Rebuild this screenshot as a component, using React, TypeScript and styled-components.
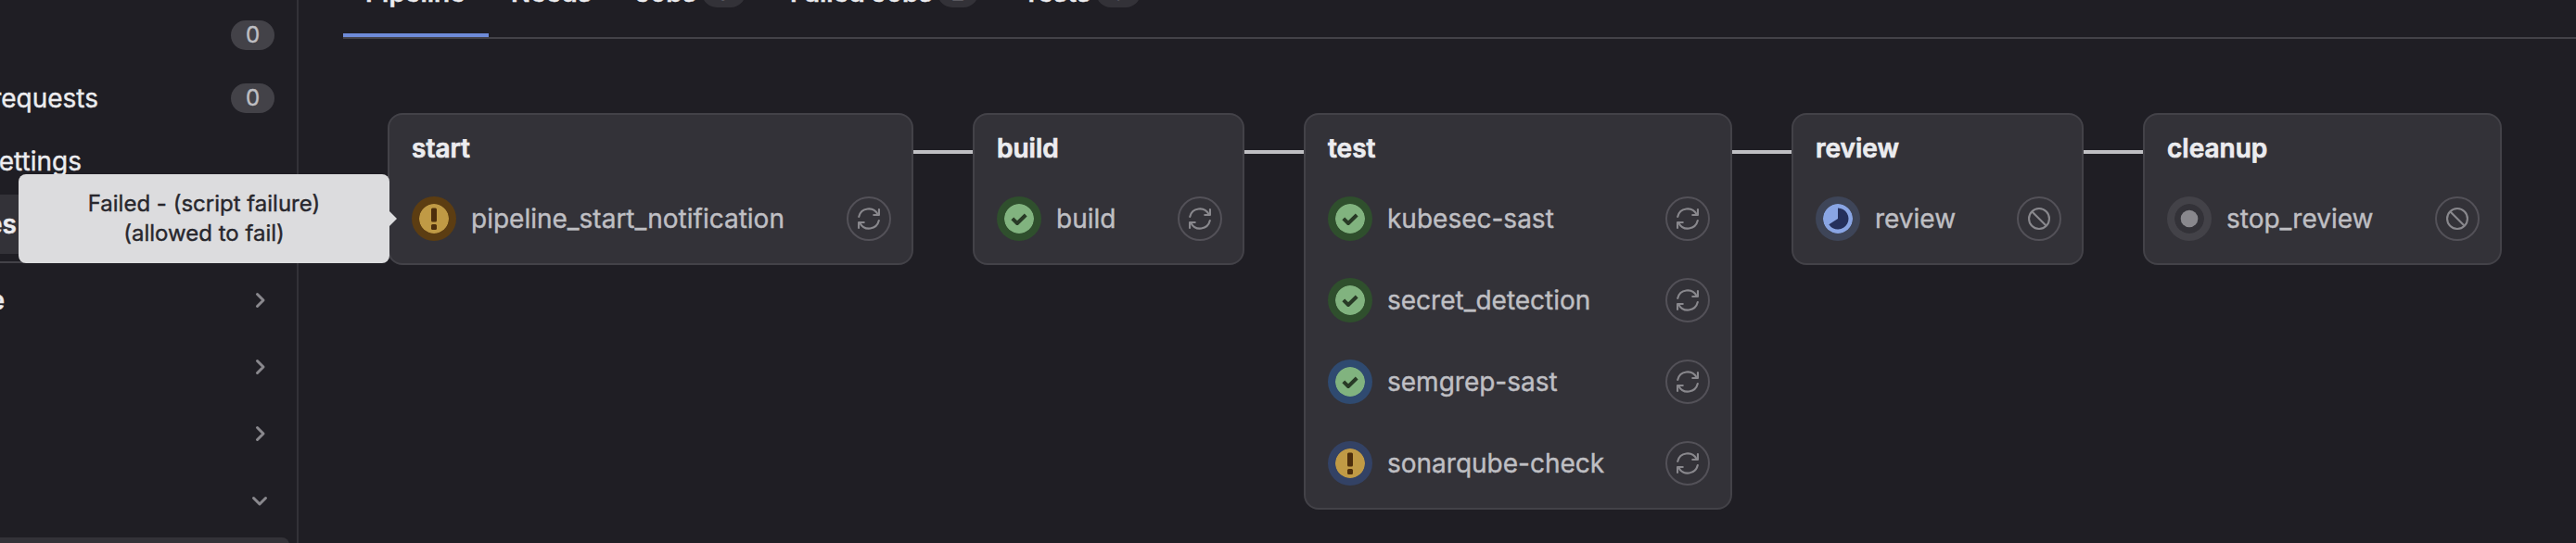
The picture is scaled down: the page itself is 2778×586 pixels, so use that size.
import React from 'react';
import styled, { createGlobalStyle } from 'styled-components';

const GlobalStyle = createGlobalStyle`
  * { box-sizing: border-box; }
  body {
    margin: 0;
    background: #1f1e24;
    font-family: Inter, "Liberation Sans", sans-serif;
    font-size: 28px;
    font-weight: 400;
    color: #ececef;
    -webkit-text-stroke: 0.4px currentColor;
    overflow: hidden;
  }
`;

const Page = styled.div`
  position: relative;
  display: flex;
  width: 2778px;
  height: 586px;
  overflow: hidden;
`;

const Sidebar = styled.aside`
  width: 322px;
  flex: none;
  padding-top: 6px;
  border-right: 2px solid #333238;
  display: flex;
  flex-direction: column;
`;

const NavGroup = styled.div<{ $gap: number }>`
  display: flex;
  flex-direction: column;
  gap: ${p => p.$gap}px;
`;

const NavItem = styled.div<{ $active?: boolean }>`
  display: flex;
  align-items: center;
  justify-content: space-between;
  height: 64px;
  flex: none;
  margin-right: 8px;
  padding-right: 16px;
  border-radius: 0 8px 8px 0;
  background: ${p => (p.$active ? '#333238' : 'transparent')};
`;

const NavLabel = styled.span<{ $end: number; $bold?: boolean }>`
  display: flex;
  justify-content: flex-end;
  width: ${p => p.$end}px;
  line-height: 40px;
  font-weight: ${p => (p.$bold ? 600 : 400)};
`;

const Divider = styled.div`
  height: 2px;
  margin: 8px 16px 8px 0;
  flex: none;
  background: #434248;
`;

const Badge = styled.span`
  display: flex;
  align-items: center;
  justify-content: center;
  width: 47px;
  height: 32px;
  border-radius: 16px;
  background: #434248;
  color: #bfbfc3;
  font-size: 24px;
  line-height: 32px;
`;

const ChevronBox = styled.svg`
  width: 32px;
  height: 32px;
`;

const Main = styled.main`
  flex: 1;
  min-width: 0;
  padding-left: 48px;
`;

const Tabs = styled.div`
  display: flex;
  height: 98px;
  margin-top: -56px;
  border-bottom: 2px solid #434248;
`;

const Tab = styled.div<{ $width: number; $active?: boolean }>`
  display: flex;
  align-items: center;
  justify-content: space-between;
  flex: none;
  width: ${p => p.$width}px;
  height: 96px;
  padding: 0 24px;
  font-weight: 600;
  white-space: nowrap;
  box-shadow: ${p => (p.$active ? 'inset 0 -4px 0 #6e8bd8' : 'none')};
`;

const TabBadge = styled(Badge)<{ $w: number }>`
  width: ${p => p.$w}px;
  background: #333238;
  font-weight: 400;
`;

const Graph = styled.div`
  display: flex;
  align-items: flex-start;
  padding: 80px 0 0 48px;
`;

const Connector = styled.div`
  width: 64px;
  height: 4px;
  margin-top: 40px;
  flex: none;
  background: #bfbfc3;
`;

const StageCard = styled.section<{ $width: number }>`
  width: ${p => p.$width}px;
  flex: none;
  padding: 16px 22px 24px 24px;
  border: 2px solid #434248;
  border-radius: 16px;
  background: #333238;
`;

const StageTitle = styled.h2`
  margin: 0 0 32px;
  font-size: 28px;
  line-height: 40px;
  font-weight: 600;
  -webkit-text-stroke-width: 0.7px;
`;

const JobList = styled.div`
  display: flex;
  flex-direction: column;
  gap: 40px;
`;

const Job = styled.div`
  display: flex;
  align-items: center;
  height: 48px;
`;

const JobName = styled.span`
  flex: 1;
  margin-left: 16px;
  color: #bfbfc3;
  -webkit-text-stroke-color: #bfbfc3;
  white-space: nowrap;
`;

const StatusRing = styled.svg<{ $ring: string }>`
  width: 48px;
  height: 48px;
  padding: 8px;
  flex: none;
  border-radius: 50%;
  background: ${p => p.$ring};
`;

const ActionButton = styled.button`
  display: flex;
  align-items: center;
  justify-content: center;
  width: 48px;
  height: 48px;
  padding: 0;
  flex: none;
  border: 2px solid #535158;
  border-radius: 50%;
  background: transparent;
  color: #89888d;

  svg {
    width: 24px;
    height: 24px;
  }
`;

const Tooltip = styled.div`
  position: absolute;
  left: 20px;
  top: 188px;
  width: 400px;
  height: 96px;
  padding: 16px;
  border-radius: 8px;
  background: #dcdcde;
  color: #28272d;
  -webkit-text-stroke-color: #28272d;
  font-size: 24px;
  line-height: 32px;
  text-align: center;

  &::after {
    content: '';
    position: absolute;
    left: 100%;
    top: 40px;
    border: 8px solid transparent;
    border-right-width: 0;
    border-left-color: #dcdcde;
  }
`;

type Status = 'warning' | 'success' | 'running' | 'manual';

function StatusIcon({ status, ring }: { status: Status; ring: string }) {
  return (
    <StatusRing $ring={ring} viewBox="0 0 32 32">
      {status === 'warning' && (
        <>
          <circle cx="16" cy="16" r="16" fill="#c09a45" />
          <rect x="13" y="4.5" width="6" height="15" rx="1.5" fill="#4d2e0c" />
          <rect x="13" y="22" width="6" height="6" rx="1.5" fill="#4d2e0c" />
        </>
      )}
      {status === 'success' && (
        <>
          <circle cx="16" cy="16" r="16" fill="#81b37f" />
          <path d="M8.8 15.8l5.2 5.2L23.2 12" fill="none" stroke="#283a26" strokeWidth="4" strokeLinejoin="round" />
        </>
      )}
      {status === 'running' && (
        <>
          <circle cx="16" cy="16" r="16" fill="#89a5e4" />
          <path d="M16 4.5A11.5 11.5 0 1 1 6.3 22.2L16 16z" fill="#25305c" />
        </>
      )}
      {status === 'manual' && (
        <>
          <circle cx="16" cy="16" r="16" fill="#333238" />
          <circle cx="16" cy="16" r="9.3" fill="#89888d" />
        </>
      )}
    </StatusRing>
  );
}

const RetryIcon = () => (
  <svg viewBox="0 0 16 16" fill="none" stroke="currentColor" strokeWidth="1.4" strokeLinecap="round" strokeLinejoin="round">
    <path d="M.8 6.6A7.3 7.3 0 0 1 14.4 4.9" />
    <path d="M15.3 1.4v3.9h-3.8" />
    <path d="M15.2 9.4A7.3 7.3 0 0 1 1.6 11.1" />
    <path d="M.7 14.6v-3.9h3.8" />
  </svg>
);

const CancelIcon = () => (
  <svg viewBox="0 0 16 16" fill="none" stroke="currentColor" strokeWidth="1.4">
    <circle cx="8" cy="8" r="7.3" />
    <path d="M3 3l10 10" />
  </svg>
);

const Chevron = ({ down }: { down?: boolean }) => (
  <ChevronBox viewBox="0 0 32 32" fill="none" stroke="#89888d" strokeWidth="3" strokeLinecap="round" strokeLinejoin="round">
    <path d={down ? 'M9.5 13.5l6.5 6.5 6.5-6.5' : 'M13.5 9.5l6.5 6.5-6.5 6.5'} />
  </ChevronBox>
);

const GREEN = '#2f4f2d';
const BROWN = '#5c3d12';

interface JobData {
  name: string;
  status: Status;
  ring: string;
  action: 'retry' | 'cancel';
}

const stages: { name: string; width: number; jobs: JobData[] }[] = [
  {
    name: 'start',
    width: 567,
    jobs: [{ name: 'pipeline_start_notification', status: 'warning', ring: BROWN, action: 'retry' }],
  },
  { name: 'build', width: 293, jobs: [{ name: 'build', status: 'success', ring: GREEN, action: 'retry' }] },
  {
    name: 'test',
    width: 462,
    jobs: [
      { name: 'kubesec-sast', status: 'success', ring: GREEN, action: 'retry' },
      { name: 'secret_detection', status: 'success', ring: GREEN, action: 'retry' },
      { name: 'semgrep-sast', status: 'success', ring: '#2f4a70', action: 'retry' },
      { name: 'sonarqube-check', status: 'warning', ring: '#334265', action: 'retry' },
    ],
  },
  { name: 'review', width: 315, jobs: [{ name: 'review', status: 'running', ring: '#3e4558', action: 'cancel' }] },
  { name: 'cleanup', width: 387, jobs: [{ name: 'stop_review', status: 'manual', ring: '#434248', action: 'cancel' }] },
];

export default function App() {
  return (
    <Page>
      <GlobalStyle />
      <Sidebar>
        <NavGroup $gap={4}>
          <NavItem>
            <NavLabel $end={0} />
            <Badge>0</Badge>
          </NavItem>
          <NavItem>
            <NavLabel $end={106}>requests</NavLabel>
            <Badge>0</Badge>
          </NavItem>
          <NavItem>
            <NavLabel $end={88}>ettings</NavLabel>
          </NavItem>
          <NavItem $active>
            <NavLabel $end={18} $bold>es</NavLabel>
          </NavItem>
        </NavGroup>
        <Divider />
        <NavGroup $gap={8}>
          <NavItem>
            <NavLabel $end={5} $bold>e</NavLabel>
            <Chevron />
          </NavItem>
          <NavItem>
            <NavLabel $end={0} />
            <Chevron />
          </NavItem>
          <NavItem>
            <NavLabel $end={0} />
            <Chevron />
          </NavItem>
          <NavItem>
            <NavLabel $end={0} />
            <Chevron down />
          </NavItem>
          <NavItem $active />
        </NavGroup>
      </Sidebar>
      <Main>
        <Tabs>
          <Tab $width={157} $active>Pipeline</Tab>
          <Tab $width={134}>Needs</Tab>
          <Tab $width={167}>
            Jobs <TabBadge $w={47}>8</TabBadge>
          </Tab>
          <Tab $width={251}>
            Failed Jobs <TabBadge $w={44}>2</TabBadge>
          </Tab>
          <Tab $width={175}>
            Tests <TabBadge $w={48}>0</TabBadge>
          </Tab>
        </Tabs>
        <Graph>
          {stages.map((stage, i) => (
            <React.Fragment key={stage.name}>
              {i > 0 && <Connector />}
              <StageCard $width={stage.width}>
                <StageTitle>{stage.name}</StageTitle>
                <JobList>
                  {stage.jobs.map(job => (
                    <Job key={job.name}>
                      <StatusIcon status={job.status} ring={job.ring} />
                      <JobName>{job.name}</JobName>
                      <ActionButton>{job.action === 'retry' ? <RetryIcon /> : <CancelIcon />}</ActionButton>
                    </Job>
                  ))}
                </JobList>
              </StageCard>
            </React.Fragment>
          ))}
        </Graph>
      </Main>
      <Tooltip>
        Failed - (script failure)
        <br />
        (allowed to fail)
      </Tooltip>
    </Page>
  );
}
